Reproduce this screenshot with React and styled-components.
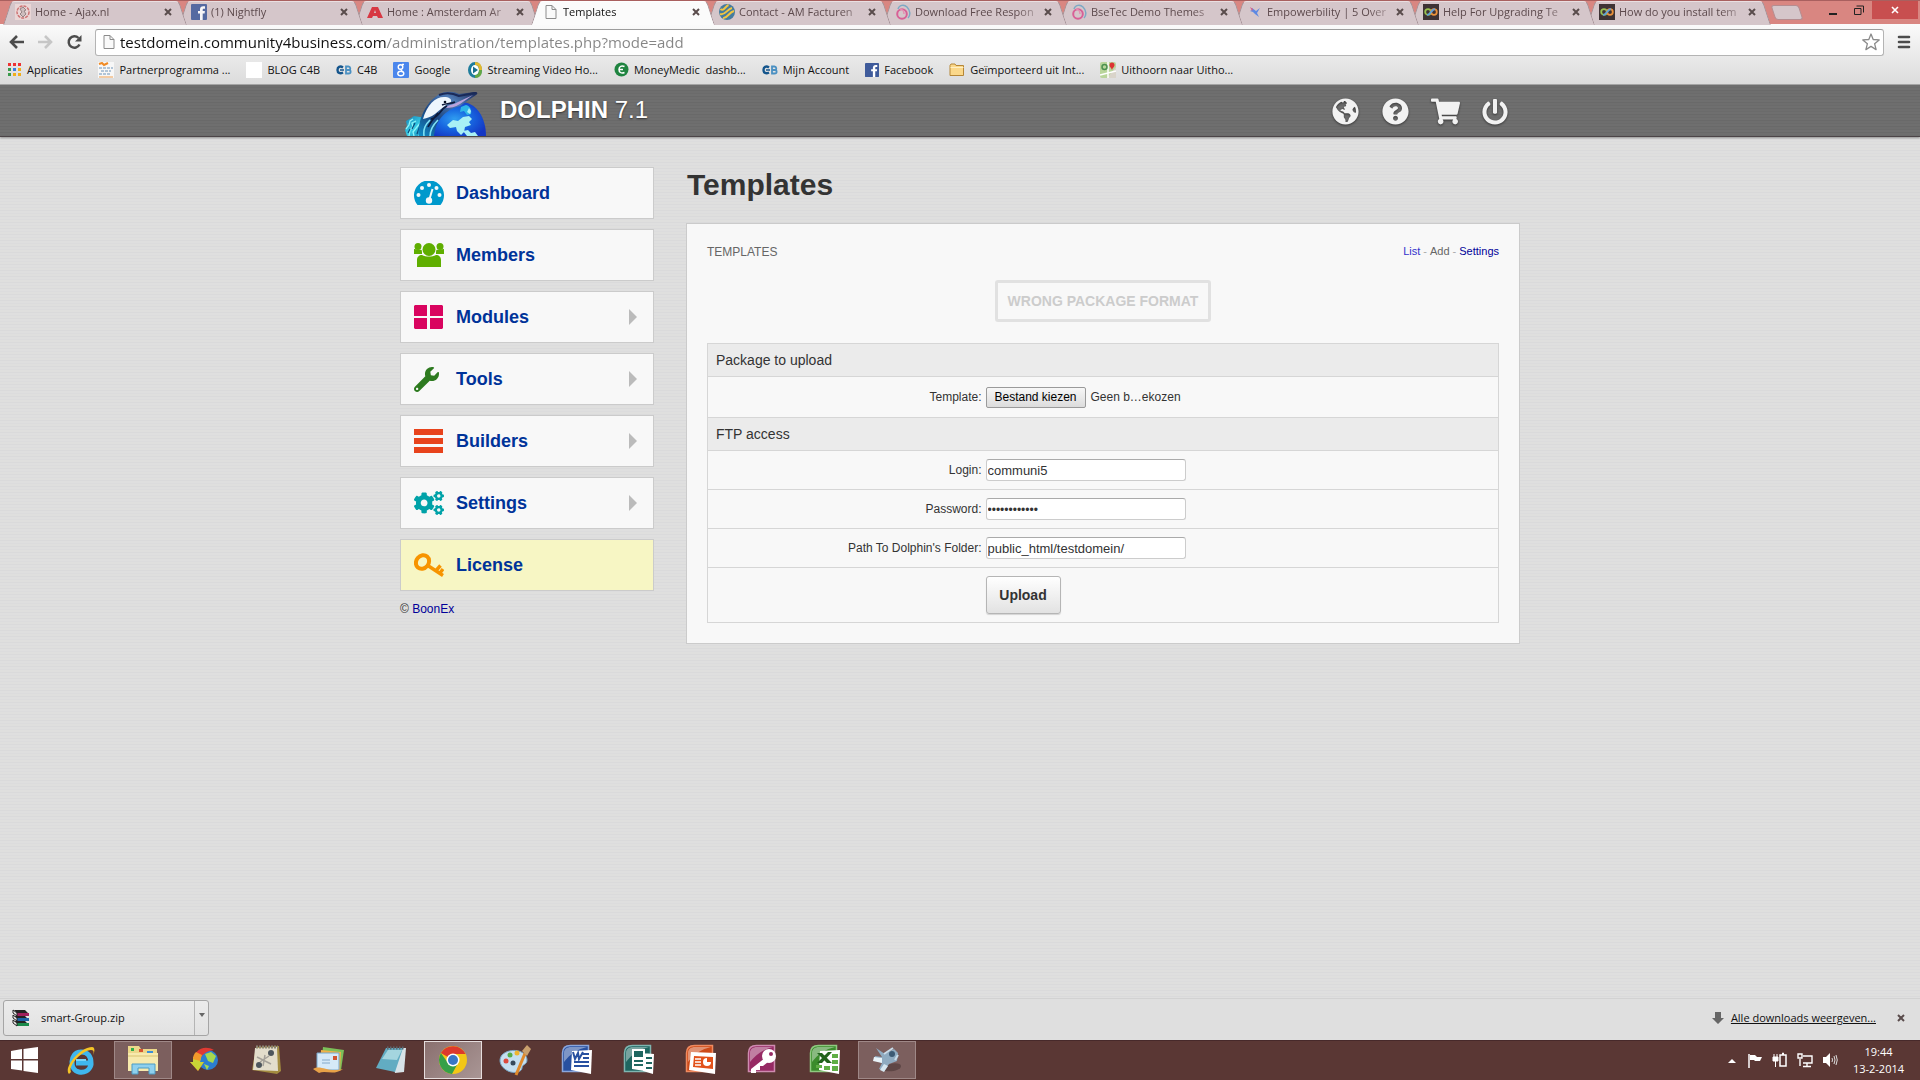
import React, { useRef } from 'react'
import styled, { createGlobalStyle, css } from 'styled-components'
import { FaCogs, FaGlobeAmericas, FaPowerOff, FaQuestionCircle, FaShoppingCart, FaWrench } from 'react-icons/fa'

const ui = '"Open Sans", "Noto Sans", sans-serif'
const arial = '"Liberation Sans", Arial, sans-serif'

const GlobalStyle = createGlobalStyle`
* { box-sizing: border-box; }
body {
  margin: 0;
  font-family: ${arial};
  font-size: 12px;
  color: #333;
}
button, input { font-family: inherit; }
button { padding: 0; border: none; background: none; color: inherit; }
a { text-decoration: none; }
svg { display: block; flex: none; }
`

const Screen = styled.div`
min-height: 100vh;
display: flex;
flex-direction: column;
`

/* browser window */
const TabStrip = styled.div`
height: 24px;
display: flex;
align-items: flex-start;
padding-left: 3px;
background: #d98681;
border-top: 1px solid #a9605f;
font-family: ${ui};
`
const Tabs = styled.div`
display: flex;
flex: 0 1 1760px;
min-width: 0;
isolation: isolate;
`
const Tab = styled.div`
position: relative;
z-index: ${p => (p.$active ? 20 : 10 - p.$index)};
flex: 0 0 184px;
height: 24px;
margin-right: -8px;
padding: 0 15px 2px 12px;
display: flex;
align-items: center;
color: ${p => (p.$active ? '#111' : '#5d4a4d')};
&::before, &::after {
  content: '';
  position: absolute;
  z-index: -1;
  top: 0;
  bottom: 0;
  width: 50%;
  background: ${p => (p.$active ? '#fbfbfb' : '#d5c6ca')};
  border-top: 1px solid ${p => (p.$active ? '#fff' : '#eadfe1')};
}
&::before {
  left: 4px;
  border-left: 1px solid #a28f94;
  border-radius: 4px 0 0 0;
  transform: skewX(-18deg);
}
&::after {
  right: 4px;
  border-right: 1px solid #a28f94;
  border-radius: 0 4px 0 0;
  transform: skewX(18deg);
}
`
const TabIcon = styled.span`
opacity: ${p => (p.$active ? 1 : 0.85)};
`
const TabTitle = styled.span`
flex: 1;
min-width: 0;
margin: 0 4px;
font-size: 11px;
line-height: 16px;
white-space: nowrap;
mask-image: linear-gradient(to right, #000 82%, rgba(0, 0, 0, 0.2));
`
const CloseButton = styled.button`
width: 9px;
height: 16px;
display: flex;
align-items: center;
justify-content: center;
color: #5a4c4c;
`
const NewTab = styled.button`
width: 28px;
height: 15px;
margin: 4px 0 0 10px;
background: #d5c6ca;
border: 1px solid #b58d90;
border-radius: 3px;
transform: skewX(18deg);
`
const WindowButtons = styled.div`
margin-left: auto;
display: flex;
padding-right: 2px;
`
const WindowButton = styled.button`
width: ${p => (p.$close ? 46 : 26)}px;
height: 18px;
display: flex;
align-items: center;
justify-content: center;
background: ${p => (p.$close ? '#c84f4f' : 'transparent')};
`
const Toolbar = styled.div`
height: 33px;
display: flex;
align-items: center;
padding: 3px 9px 0 8px;
background: linear-gradient(#fbfbfb, #e9e9e9);
`
const ToolButton = styled.button`
width: 29px;
height: 24px;
color: ${p => (p.$off ? '#c6c6c6' : '#4c4c4c')};
`
const Address = styled.label`
flex: 1;
height: 27px;
display: flex;
align-items: center;
padding: 0 3px 0 5px;
background: #fff;
border: 1px solid #b4b4b4;
border-top-color: #9c9c9c;
border-radius: 3px;
`
const AddressInput = styled.input`
flex: 1;
margin-left: 3px;
padding: 0;
border: none;
outline: none;
font-family: ${ui};
font-size: 15px;
line-height: 22px;
color: transparent;
background: linear-gradient(to right, #111 266px, #858585 266px);
background-clip: text;
`
const MenuButton = styled.button`
width: 14px;
margin-left: 13px;
`
const Bookmarks = styled.nav`
height: 28px;
display: flex;
align-items: center;
gap: 16px;
padding: 0 8px 2px;
background: linear-gradient(#e9e9e9, #dcdcdc);
border-bottom: 1px solid #a8a8a8;
font-family: ${ui};
`
const Bookmark = styled.a`
display: flex;
align-items: center;
gap: 5px;
font-size: 11px;
line-height: 16px;
white-space: pre;
color: #111;
`

/* page */
const Page = styled.main`
flex: 1;
background: repeating-linear-gradient(#dfdfdf 0 2px, #dcdcdd 2px 3px, #dfdfde 3px 5px, #dadadb 5px 6px);
`
const Header = styled.header`
height: 52px;
background: repeating-linear-gradient(#6e6e6e 0 2px, #6b6b6b 2px 3px, #6f6f6f 3px 5px, #696969 5px 6px);
border-bottom: 1px solid #4c4548;
box-shadow: 0 1px 2px rgba(0, 0, 0, 0.35);
`
const Container = styled.div`
width: 1120px;
max-width: 100%;
margin: 0 auto;
display: flex;
`
const HeaderRow = styled(Container)`
height: 51px;
align-items: flex-end;
padding: 0 10px 0 4px;
`
const LogoText = styled.a`
margin: 0 0 12px 14px;
font-size: 24px;
line-height: 28px;
color: #fff;
text-shadow: 0 1px 2px rgba(0, 0, 0, 0.6);
`
const HeaderTools = styled.div`
margin-left: auto;
height: 51px;
padding-top: 2px;
display: flex;
align-items: center;
gap: 20px;
`
const HeaderLink = styled.a`
width: 30px;
display: flex;
justify-content: center;
color: #f2f2f2;
filter: drop-shadow(0 1px 1px rgba(0, 0, 0, 0.5));
`
const Body = styled(Container)`
padding-top: 30px;
gap: 32px;
`
const Sidebar = styled.aside`
width: 254px;
flex: none;
`
const Menu = styled.nav`
display: flex;
flex-direction: column;
gap: 10px;
`
const MenuItem = styled.a`
height: 52px;
display: flex;
align-items: center;
padding: 0 16px 0 13px;
background: ${p => (p.$highlight ? '#f7f6c4' : '#f8f8f8')};
border: 1px solid #cbcbcb;
font-size: 18px;
font-weight: bold;
color: #039;
`
const MenuIcon = styled.span`
width: 42px;
color: ${p => p.$color};
`
const Arrow = styled.span`
margin-left: auto;
border: 8px solid transparent;
border-left-color: #bbb;
border-right-width: 0;
`
const Copyright = styled.p`
margin: 10px 0 0;
line-height: 16px;
a { color: #009; }
`
const Content = styled.section`
flex: 1;
min-width: 0;
`
const PageTitle = styled.h1`
margin: 0 0 20px 1px;
font-size: 30px;
line-height: 36px;
color: #333;
`
const Panel = styled.div`
padding: 20px;
background: #f8f8f8;
border: 1px solid #cbcbcb;
`
const PanelHead = styled.div`
display: flex;
justify-content: space-between;
align-items: flex-start;
height: 16px;
color: #666;
`
const PanelTitle = styled.h2`
margin: 0;
font-size: 12px;
font-weight: normal;
line-height: 16px;
text-transform: uppercase;
`
const PanelLinks = styled.div`
display: flex;
gap: 3px;
font-size: 11px;
line-height: 14px;
color: #aaa;
`
const PanelLink = styled.a`
color: ${p => p.$color};
`
const Message = styled.div`
width: fit-content;
margin: 20px auto 21px;
padding: 10px;
border: 3px solid #e1e1e1;
border-radius: 3px;
font-size: 14px;
font-weight: bold;
line-height: 16px;
text-transform: uppercase;
color: #ccc;
`
const Form = styled.form`
border: 1px solid #d6d6d6;
`
const SectionTitle = styled.h3`
height: 33px;
margin: 0;
padding-left: 8px;
font-size: 14px;
font-weight: normal;
line-height: 33px;
background: #ebebeb;
border-bottom: 1px solid #d6d6d6;
`
const Row = styled.div`
display: grid;
grid-template-columns: 35% 1fr;
align-items: center;
height: ${p => p.$height}px;
border-bottom: 1px solid #d6d6d6;
&:last-child { border-bottom: none; }
`
const FieldLabel = styled.label`
padding-right: 3px;
text-align: right;
line-height: 16px;
`
const Field = styled.div`
display: flex;
align-items: center;
gap: 5px;
padding-left: 1px;
`
const TextInput = styled.input`
width: 200px;
height: 22px;
padding: 1px 1px 0;
background: #fff;
border: 1px solid #ccc;
border-top-color: #aaa;
border-radius: 3px;
font-size: ${p => (p.type === 'password' ? 12 : 13)}px;
color: #333;
`
const FileInput = styled.input`
display: none;
`
const FileButton = styled.button`
width: 100px;
height: 21px;
background: linear-gradient(#f7f7f7, #dcdcdc);
border: 1px solid #9a9a9a;
border-radius: 2px;
font-size: 12px;
color: #000;
`
const UploadButton = styled.button`
width: 75px;
height: 38px;
background: linear-gradient(#fff, #e2e2e2);
border: 1px solid #b5b5b5;
border-radius: 3px;
box-shadow: 0 1px 1px rgba(0, 0, 0, 0.15);
font-size: 14px;
font-weight: bold;
color: #333;
`

/* downloads and taskbar */
const DownloadBar = styled.div`
height: 42px;
display: flex;
align-items: center;
padding: 0 15px 4px 3px;
background: #dfdfdf;
border-top: 1px solid #d2d2d2;
font-family: ${ui};
color: #111;
`
const Download = styled.div`
width: 206px;
height: 36px;
display: flex;
background: linear-gradient(#ebebeb, #e2e2e2);
border: 1px solid #a5a5a5;
border-radius: 3px;
`
const DownloadFile = styled.button`
flex: 1;
display: flex;
align-items: center;
gap: 11px;
padding-left: 8px;
font-size: 11px;
`
const DownloadMenu = styled.button`
width: 14px;
display: flex;
justify-content: center;
padding-top: 12px;
border-left: 1px solid #b4b4b4;
color: #666;
`
const AllDownloads = styled.a`
margin: 0 20px 0 7px;
font-size: 11px;
color: #111;
text-decoration: underline;
`
const Spacer = styled.div`
flex: 1;
`
const Taskbar = styled.footer`
height: 40px;
display: flex;
align-items: center;
gap: 4px;
padding-right: 16px;
background: #5a3734;
box-shadow: inset 0 1px #47292a;
`
const TaskButton = styled.button`
width: ${p => (p.$start ? 48 : 58)}px;
height: 38px;
display: flex;
align-items: center;
justify-content: center;
${p => p.$open && css`
  background: #7c5f5e;
  border: 1px solid #9f8887;
`}
${p => p.$active && css`
  background: linear-gradient(135deg, #8a706f, #a99695);
  border: 1px solid #e6dddd;
`}
`
const Tray = styled.div`
display: flex;
align-items: center;
gap: 9px;
`
const Clock = styled.div`
margin-left: 6px;
font-family: ${ui};
font-size: 11px;
line-height: 17px;
text-align: center;
color: #fff;
`

const Svg = ({ w = 16, h = w, box, children }) => (
  <svg width={w} height={h} viewBox={box || `0 0 ${w} ${h}`} aria-hidden="true">{children}</svg>
)

const Cross = ({ size = 8, color = 'currentColor', width = 2 }) => (
  <Svg w={size} box="0 0 8 8">
    <path d="M1 1l6 6M7 1L1 7" stroke={color} strokeWidth={width} />
  </Svg>
)

/* favicons */
const AjaxIcon = () => (
  <Svg>
    <rect width="16" height="16" fill="#eed9d9" />
    <circle cx="8" cy="8" r="6" fill="none" stroke="#c66" strokeWidth="1.5" strokeDasharray="3 1" />
    <path d="M5 5l3-2 3 3-2 1 2 3-3 3-3-3 2-2z" fill="#cdbcbc" stroke="#8a7878" />
  </Svg>
)
const FacebookIcon = ({ size = 16 }) => (
  <Svg w={size} box="0 0 16 16">
    <rect width="16" height="16" rx="1" fill="#3f5b9b" />
    <path d="M9 16V9.500H7V7h2V5.500C9 3.300 10.300 2.200 12.200 2.200H14v2.500h-1.200c-.9 0-1.100.4-1.100 1.200V7h2.200l-.3 2.500h-1.900V16z" fill="#fff" />
  </Svg>
)
const AmsterdamIcon = () => (
  <Svg>
    <path d="M0 14L5 3h6l5 11h-5l-1-2H6l-1 2zM7 9h2L8 6z" fill="#d8202c" fillRule="evenodd" />
  </Svg>
)
const PageIcon = () => (
  <Svg>
    <path d="M3 1.500h6l4 4v9H3z" fill="#fafafa" stroke="#8c8c8c" />
    <path d="M9 1.500v4h4" fill="none" stroke="#8c8c8c" />
  </Svg>
)
const StripedBall = () => (
  <Svg>
    <circle cx="8" cy="8" r="8" fill="#2c6f97" />
    <path d="M1.500 5c3 3 5-3 8-4M1 10c5 2 7-5 12-6M4 14c4 1 6-6 11-7" fill="none" stroke="#f5c52b" strokeWidth="2" />
  </Svg>
)
const RingIcon = () => (
  <Svg>
    <circle cx="7" cy="10" r="4.800" fill="none" stroke="#d94f8e" strokeWidth="2" />
    <path d="M3 5c1-4 6-5 9-2s4 8 1 11" fill="none" stroke="#6fa5c4" strokeWidth="1.500" />
    <path d="M5 5c2 0 4 2 4 5" fill="none" stroke="#e886ae" strokeWidth="1.500" />
  </Svg>
)
const BirdIcon = () => (
  <Svg>
    <path d="M5 4l4 3 4-3-3 5 2 4-4-3-2-2-3-1 2-1z" fill="#4a7fe8" />
    <path d="M3 3l3 2-1 2z" fill="#d84a7a" />
  </Svg>
)
const LoopIcon = () => (
  <Svg>
    <rect width="16" height="16" fill="#241a1c" />
    <circle cx="5" cy="8" r="2.800" fill="none" stroke="#8fc13c" strokeWidth="1.800" />
    <circle cx="11" cy="8" r="2.800" fill="none" stroke="#f08a24" strokeWidth="1.800" />
    <path d="M4 10.800c4 .5 4-5.600 8-5.600" fill="none" stroke="#4b9ade" strokeWidth="1.800" />
  </Svg>
)
const AppsIcon = () => (
  <Svg w={14}>
    {['#e33', '#e33', '#e33', '#3a9b4b', '#3a7de0', '#f0ae1b', '#3a9b4b', '#f0ae1b', '#f0ae1b'].map((c, i) => (
      <rect key={i} x={(i % 3) * 5} y={Math.floor(i / 3) * 5} width="3" height="3" fill={c} />
    ))}
  </Svg>
)
const PartnerIcon = () => (
  <Svg>
    <rect width="16" height="16" fill="#f7f7f7" />
    <path d="M1 2l3-1 2 2 4-2" stroke="#f08a24" strokeWidth="2" fill="none" />
    <path d="M1 6h14M3 9h10M1 12h12" stroke="#6d93b8" strokeDasharray="3 1" />
    <path d="M1 15h14" stroke="#f0a050" />
  </Svg>
)
const BlankIcon = () => (
  <Svg><rect width="16" height="16" fill="#fff" /></Svg>
)
const C4BIcon = () => (
  <Svg>
    <path d="M7 5.500C4 3.500 1.500 5 1.500 8s2.500 4 5.500 2.500" fill="none" stroke="#14558c" strokeWidth="2.400" />
    <path d="M4 8h4" stroke="#14558c" strokeWidth="1.500" />
    <path d="M10 4.500v7h2.500c3 0 2.500-3.500.5-3.500 2 0 1.500-3.500-.5-3.500zM10 8h3" fill="none" stroke="#4a90c2" strokeWidth="1.800" />
  </Svg>
)
const GoogleIcon = () => (
  <Svg>
    <rect width="16" height="16" rx="1" fill="#4a86ec" />
    <circle cx="7.500" cy="5" r="2.300" fill="none" stroke="#fff" strokeWidth="1.400" />
    <ellipse cx="7.800" cy="11.500" rx="3" ry="2.200" fill="none" stroke="#fff" strokeWidth="1.400" />
    <path d="M9 2.500h2M8 7.500l1 1.500" stroke="#fff" strokeWidth="1.300" />
  </Svg>
)
const StreamIcon = () => (
  <Svg>
    <ellipse cx="8" cy="8" rx="5.500" ry="6.500" fill="#fff" stroke="#1f7d9c" strokeWidth="3" />
    <path d="M8 1.500c4 0 5.500 3 5.500 6.500" fill="none" stroke="#e2b92f" strokeWidth="3" />
    <path d="M13.500 8c0 4-2 6.500-5.500 6.500" fill="none" stroke="#64a843" strokeWidth="3" />
    <path d="M6 4.500l5 3.500-5 3.500z" fill="#1a6f8d" />
  </Svg>
)
const MoneyIcon = () => (
  <Svg w={15}>
    <circle cx="7.500" cy="7.500" r="7" fill="#1f8440" />
    <path d="M10.500 4.500C7 3 5 5 5 7.500s2 4.500 5.500 3M5 7.500H9" fill="none" stroke="#fff" strokeWidth="1.500" />
  </Svg>
)
const FolderIcon = () => (
  <Svg>
    <path d="M1 3.500l1-1.500h4l1 1.500h7.500v10H1z" fill="#fbd88a" stroke="#b58636" />
    <path d="M1.500 5.500h13" stroke="#fff0c4" />
  </Svg>
)
const MapIcon = () => (
  <Svg>
    <rect width="16" height="16" rx="2" fill="#b9d59b" />
    <path d="M7 16L16 5v11z" fill="#d9d4ca" />
    <path d="M0 13L16 9M8 0v16" stroke="#fff" strokeWidth="1.500" />
    <circle cx="4.500" cy="5" r="2.500" fill="none" stroke="#4c9150" strokeWidth="1.500" />
    <path d="M12 8c-1-3-2.500-3-2.500-5a2.500 2.500 0 0 1 5 0c0 2-1.500 2-2.500 5z" fill="#d33" />
  </Svg>
)

/* toolbar drawings */
const BackIcon = ({ flip }) => (
  <Svg w={17} h={24}>
    <path d="M9 6l-6 6 6 6M3 12h13" fill="none" stroke="currentColor" strokeWidth="2.600" transform={flip ? 'translate(17 0) scale(-1 1)' : undefined} />
  </Svg>
)
const ReloadIcon = () => (
  <Svg w={17} h={24}>
    <path d="M12.500 8A5.700 5.700 0 1 0 13.500 14.500" fill="none" stroke="currentColor" strokeWidth="2.500" />
    <path d="M15.500 5v6.500H9z" fill="currentColor" />
  </Svg>
)
const StarIcon = () => (
  <Svg w={18}>
    <path d="M9 1l2.200 5.500 6 .4-4.600 3.800 1.500 5.900L9 13.400l-5.100 3.200 1.500-5.900L.8 6.900l6-.4z" fill="#fff" stroke="#8a8a8a" strokeWidth="1.300" strokeLinejoin="round" />
  </Svg>
)
const HamburgerIcon = () => (
  <Svg w={14}>
    <path d="M2 2h10M2 7h10M2 12h10" stroke="#4c4c4c" strokeWidth="2.600" strokeLinecap="round" />
  </Svg>
)

const DolphinLogo = () => (
  <Svg w={82} h={45}>
    <defs>
      <radialGradient id="sea" cx="0.45" cy="0.5" r="0.6">
        <stop offset="0" stopColor="#2f9df0" />
        <stop offset="0.5" stopColor="#1766e0" />
        <stop offset="1" stopColor="#1437c4" />
      </radialGradient>
      <linearGradient id="skin" x1="0" y1="1" x2="1" y2="0">
        <stop offset="0" stopColor="#0d8dc8" />
        <stop offset="0.35" stopColor="#1b4580" />
        <stop offset="0.7" stopColor="#4f7bb5" />
        <stop offset="1" stopColor="#16224f" />
      </linearGradient>
      <linearGradient id="splash" x1="0" y1="0" x2="1" y2="1">
        <stop offset="0" stopColor="#1581b5" />
        <stop offset="0.5" stopColor="#35cbe6" />
        <stop offset="1" stopColor="#1270a8" />
      </linearGradient>
    </defs>
    <path d="M25 45C26 25 42 11 57 11c15 0 25 15 25 34z" fill="url(#sea)" />
    <path d="M62 14c4 1 6 5 5 9l-4 1-3-4-4 1 1-5z" fill="#2fb6e8" />
    <path d="M43 34l6-5 5 1 5-4 6-1 3 3-3 3 2 3-6 2-1 5-3 3-4-4-1-4-6 1zM59 40l5-1 3 3 4-1 3 4H63zM65 17l2 3-1 3-3-2z" fill="#a8f0f5" />
    <path d="M3 45l-2-6 2-4-1-5 5-3 3-2 6 1 9 2-3 17z" fill="url(#splash)" />
    <path d="M2 38l3-4 1-4 3-2M5 45l1-6 3-3-1-4 4-2M10 45l-1-4 4-5 4-5M15 45l2-7 5-7" fill="none" stroke="#8df4f8" strokeWidth="1.300" />
    <path d="M4 42l2-4M8 38l3-6M13 43l3-9" fill="none" stroke="#0b4a7c" strokeWidth="1.200" />
    <path d="M15 45C13 31 21 12 34 4c6-4 15-4 21-1l16-2c3 0 3 2 1 3L56 15C45 18 41 22 36 28c-4 5-5 11-6 17z" fill="url(#skin)" />
    <path d="M19 28C23 14 31 6 40 6c5 0 8 2 7 5-6 3-11 8-16 12-4 3-8 4-12 5z" fill="#eef6fd" />
    <path d="M41 17c4-4 8-3 13-6l15-7-13 9c-5 3-9 4-15 4z" fill="#b9a3dc" />
    <path d="M35 4c7-3 14-2 20 1l16-3" fill="none" stroke="#1a2a58" strokeWidth="2" />
    <path d="M38 14c5-2 9-1 13-3M27 28c9-2 9-10 16-13M24 36c3-6 6-9 10-14" fill="none" stroke="#0d1b3c" strokeWidth="1.600" />
    <path d="M20 45c-1-8 2-12 6-16M26 45c0-7 4-12 8-16" fill="none" stroke="#7ee2f4" strokeWidth="1.600" />
    <circle cx="41" cy="11" r="1.300" fill="#071022" />
  </Svg>
)

/* sidebar drawings */
const GaugeIcon = () => (
  <Svg w={30} h={24}>
    <path d="M3.500 24A15 15 0 1 1 26.500 24z" fill="currentColor" />
    <g fill="#f8f8f8">
      <circle cx="4.500" cy="14" r="2" />
      <circle cx="8" cy="7" r="2" />
      <circle cx="15" cy="4" r="2" />
      <circle cx="22.500" cy="7" r="2" />
      <circle cx="25.500" cy="14" r="2" />
      <circle cx="15" cy="19.500" r="3.200" />
    </g>
    <path d="M15.500 18l3-10" stroke="#f8f8f8" strokeWidth="2" />
  </Svg>
)
const GroupIcon = () => (
  <Svg w={30} h={24}>
    <g fill="currentColor">
      <circle cx="4" cy="3.500" r="3.500" />
      <circle cx="26" cy="3.500" r="3.500" />
      <path d="M0 6l8 1v4H0zM30 6l-8 1v4h8z" />
      <circle cx="15" cy="6.500" r="7.500" fill="#f8f8f8" />
      <circle cx="15" cy="6.500" r="6.500" />
      <path d="M3 24V17c0-3 2-5 5-5 4 2 10 2 14 0 3 0 5 2 5 5v7z" />
    </g>
  </Svg>
)
const BlocksIcon = () => (
  <Svg w={30} h={24}>
    <path d="M1 0h12v11H0V1zM16 0h12l1 1v10H16zM0 13h13v11H1l-1-1zM16 13h13v10l-1 1H16z" fill="currentColor" />
  </Svg>
)
const BarsIcon = () => (
  <Svg w={30} h={24}>
    <path d="M0 0h29v6H0zM0 9h29v6H0zM0 18h29v6H0z" fill="currentColor" />
  </Svg>
)
const KeyIcon = () => (
  <Svg w={30} h={24}>
    <ellipse cx="8.500" cy="9" rx="7.200" ry="6.200" transform="rotate(-50 8.500 9)" fill="none" stroke="currentColor" strokeWidth="4" />
    <path d="M13 12l16 10.500M22.500 17l4-4.500M26 20l3-4" fill="none" stroke="currentColor" strokeWidth="3.400" />
  </Svg>
)

/* taskbar drawings */
const WindowsIcon = () => (
  <Svg w={27} h={26}>
    <path d="M0 4l11-2v10H0zM12.500 2L27 0v12H12.500zM0 13.500h11v10L0 22zM12.500 13.500H27V26l-14.500-2z" fill="#fff" />
  </Svg>
)
const ExplorerIcon = () => (
  <Svg w={32}>
    <path d="M26 21c-2 6-7 8-12 7C4 26 5 9 15 8c8-1 11 5 11 11H11" fill="none" stroke="#3fb7ee" strokeWidth="5" />
    <path d="M11 16h10" stroke="#7bd5f7" strokeWidth="2" />
    <path d="M4 30C-2 24 15 3 27 3c3 0 3 4 1 8 1-3 1-5-2-5C16 7 3 22 6 28z" fill="#f5c526" />
  </Svg>
)
const FilesIcon = () => (
  <Svg w={32}>
    <path d="M1 2h11l2 3h16v22H1z" fill="#ecd88a" />
    <path d="M4 4h3v3H4z" fill="#2fae4a" /><path d="M12 5h4v3h-4z" fill="#d8542f" /><path d="M20 7h6v3h-6z" fill="#3a90d8" />
    <path d="M1 9h30v18H1z" fill="#f7eaae" /><path d="M1 12h30" stroke="#d8c270" />
    <path d="M5 30V20h23v10h-6v-6H11v6z" fill="#8fd0ee" stroke="#4c9cc4" />
  </Svg>
)
const SwirlIcon = () => (
  <Svg w={30}>
    <circle cx="18" cy="15" r="10" fill="#2b7ed0" />
    <path d="M15 9l6-2 5 4-3 7-5-2zM14 19l5 2-2 4z" fill="#a6d84f" />
    <path d="M24 5C14-1 3 5 3 17H0l8 9 6-9h-4c0-6 5-11 14-12z" fill="#e03a32" />
    <path d="M3 17H0l8 9 6-9h-4l1-4-8-1z" fill="#c8d436" />
    <path d="M3 14c0-3 1-5 3-7l6 3-2 6z" fill="#f29a2b" />
  </Svg>
)
const MapBookIcon = () => (
  <Svg w={32}>
    <path d="M5 3l23-1 2 25-4 3-25-4z" fill="#a38c40" />
    <path d="M4 4l22-1 1 24-25-1z" fill="#e3ddcb" />
    <circle cx="20" cy="9" r="3" fill="#4d565c" /><circle cx="8" cy="21" r="3" fill="#4d565c" />
    <path d="M6 13l14 7M9 18l9-6M14 11l-2 11" stroke="#a5a199" strokeWidth="1.500" />
    <path d="M5 3h22" stroke="#8b8573" strokeWidth="3" strokeDasharray="2 1" />
  </Svg>
)
const MailIcon = () => (
  <Svg w={32}>
    <path d="M10 3l21 3-3 20-20-3z" fill="#7cbf59" />
    <path d="M8 6l20 2-1 18-20-2z" fill="#f0b24a" />
    <path d="M4 9h22v17H4z" fill="#d5e9f8" stroke="#78a9cc" />
    <path d="M20 12h4v4h-4z" fill="#d05430" /><path d="M9 16h8M9 19h8" stroke="#84a8c8" />
    <path d="M0 25c8-5 14 4 30 0-9 7-17 1-24 4z" fill="#e8a248" />
  </Svg>
)
const NotepadIcon = () => (
  <Svg w={32}>
    <path d="M13 4h18l-2 24-9 1z" fill="#d8e3e8" />
    <path d="M11 4h17l-8 24L1 24z" fill="#62acc2" /><path d="M13 6h14l-5 10L7 15z" fill="#a4d5df" />
    <path d="M12 4h18" stroke="#5d6870" strokeWidth="3" strokeDasharray="1.500 1.500" />
  </Svg>
)
const ChromeIcon = () => (
  <Svg w={30}>
    <circle cx="15" cy="15" r="14" fill="#f3c716" />
    <path d="M15 15L2.900 8A14 14 0 0 1 27.500 9H15z" fill="#dc3a2c" />
    <path d="M2.900 8A14 14 0 0 0 14 29l6-11-5-3-5 3z" fill="#36a048" />
    <circle cx="15" cy="15" r="6.500" fill="#fff" /><circle cx="15" cy="15" r="5" fill="#3877c6" />
  </Svg>
)
const PaintIcon = () => (
  <Svg w={32}>
    <path d="M3 11c8-8 25-5 25 5 0 5-5 4-5 8s-8 6-14 3C1 23-1 16 3 11z" fill="#c5dff0" stroke="#77a6c5" />
    <circle cx="7" cy="17" r="2.500" fill="#dc4a3d" /><circle cx="11" cy="11" r="2.500" fill="#55ae4a" /><circle cx="18" cy="9" r="2.500" fill="#eeb52f" /><circle cx="14" cy="19" r="2.500" fill="#36495b" />
    <path d="M27 7L17 31" stroke="#e08a2b" strokeWidth="3" /><path d="M23 7l5-6 4 4-4 7z" fill="#c9a06d" />
  </Svg>
)
const OfficeIcon = ({ color, light, children }) => (
  <Svg w={32}>
    <path d="M1.500 27.500V9c0-5 3-7.500 8-7.500h18v26z" fill={color} stroke={light} strokeWidth="1.500" />
    <path d="M3 18V9c0-4 3-6 7-6h16C17 5 9 10 3 18z" fill="#fff" opacity="0.4" />
    {children}
  </Svg>
)
const Sheet = () => <path d="M11 7l20-1-1 24-20-4z" fill="#fff" />
const WordIcon = () => (
  <OfficeIcon color="#2850a0" light="#8aa6dc">
    <Sheet />
    <path d="M12 8l2 7 3-6 1 6 4-7M22 10h6M22 14h6M13 18h15M13 22h15" fill="none" stroke="#2850a0" strokeWidth="2" />
  </OfficeIcon>
)
const PublisherIcon = () => (
  <OfficeIcon color="#1e6660" light="#7fb5b0">
    <path d="M9 5h13v22l-13-2zM19 9l12 1-1 20-10-3z" fill="#fff" />
    <path d="M11 7h9v6h-9zM11 16h9v2h-9zM11 20h9v2h-9zM23 13h6v2h-6zM23 18h6v2h-6zM23 23h6v2h-6z" fill="#1e6660" />
  </OfficeIcon>
)
const PowerpointIcon = () => (
  <OfficeIcon color="#cd4a18" light="#f08a60">
    <path d="M6 8l25 1-1 21-26-4z" fill="#fff" />
    <path d="M9 12l19 1v12L8 23z" fill="#e2521b" />
    <path d="M10 15h6M10 18h6M10 21h6" stroke="#fff" strokeWidth="1.500" /><circle cx="22" cy="18" r="4" fill="#fff" /><path d="M22 18v-4h4v4z" fill="#e2521b" />
  </OfficeIcon>
)
const AccessIcon = () => (
  <OfficeIcon color="#962a64" light="#cf8bb0">
    <circle cx="22" cy="12" r="7" fill="#fff" /><circle cx="24" cy="10" r="2" fill="#962a64" />
    <path d="M18 14L4 25v4h5v-3h4v-4h3l5-4z" fill="#fff" />
  </OfficeIcon>
)
const ExcelIcon = () => (
  <OfficeIcon color="#3b8c2c" light="#8fca80">
    <Sheet />
    <path d="M8 9h5l10 10h-5zM19 8h4L13 19H8z" fill="#22631c" />
    <path d="M23 10h6v4h-6zM23 16h6v4h-6zM7 21h6v3H7zM15 22h6v4h-6zM23 22h6v5h-6z" fill="#5fae45" />
  </OfficeIcon>
)
const CameraIcon = () => (
  <Svg w={32}>
    <path d="M12 24c6-6 18-6 18-2s-8 6-16 5z" fill="#4b3535" opacity="0.6" />
    <path d="M5 4l9 6 9-5 4 4-1 8-8 3-5 7-5-2 3-6-8-3 1-4 7 1z" fill="#8fabc1" />
    <path d="M3 13l8 1v5l-9-2z" fill="#e9f4fa" /><path d="M9 26l4-6 4 2-4 6z" fill="#d5e6f0" />
    <circle cx="21" cy="10" r="3" fill="#3c5a74" /><path d="M13 10l9-6M24 16l3-5" stroke="#c8dcea" strokeWidth="2" />
  </Svg>
)
const BooksIcon = () => (
  <Svg w={18}>
    <path d="M2 1h11l3 3H5zM2 7h11l3 3H5zM2 12h11l3 3H5z" fill="#222" />
    <path d="M5 4h12v3H5z" fill="#a01f5c" /><path d="M5 9h12v3H5z" fill="#1d62a8" /><path d="M5 14h12v3H5z" fill="#1a8a4a" />
    <path d="M1 1l4 3v3L1 4zM1 6l4 3v3L1 9zM1 11l4 3v3l-4-3z" fill="#eee" stroke="#222" />
  </Svg>
)

const tabs = [
  { title: 'Home - Ajax.nl', icon: <AjaxIcon /> },
  { title: '(1) Nightfly', icon: <FacebookIcon /> },
  { title: 'Home : Amsterdam Ar', icon: <AmsterdamIcon /> },
  { title: 'Templates', icon: <PageIcon />, active: true },
  { title: 'Contact - AM Facturen', icon: <StripedBall /> },
  { title: 'Download Free Respon', icon: <RingIcon /> },
  { title: 'BseTec Demo Themes', icon: <RingIcon /> },
  { title: 'Empowerbility | 5 Over', icon: <BirdIcon /> },
  { title: 'Help For Upgrading Te', icon: <LoopIcon /> },
  { title: 'How do you install tem', icon: <LoopIcon /> },
]

const bookmarks = [
  ['Applicaties', <AppsIcon />],
  ['Partnerprogramma ...', <PartnerIcon />],
  ['BLOG C4B', <BlankIcon />],
  ['C4B', <C4BIcon />],
  ['Google', <GoogleIcon />],
  ['Streaming Video Ho...', <StreamIcon />],
  ['MoneyMedic  dashb...', <MoneyIcon />],
  ['Mijn Account', <C4BIcon />],
  ['Facebook', <FacebookIcon size={14} />],
  ['Geïmporteerd uit Int...', <FolderIcon />],
  ['Uithoorn naar Uitho...', <MapIcon />],
]

const menu = [
  { name: 'Dashboard', color: '#0099cc', icon: <GaugeIcon /> },
  { name: 'Members', color: '#5fae00', icon: <GroupIcon /> },
  { name: 'Modules', color: '#d9045f', icon: <BlocksIcon />, sub: true },
  { name: 'Tools', color: '#2d7a1f', icon: <FaWrench size={25} />, sub: true },
  { name: 'Builders', color: '#e8431c', icon: <BarsIcon />, sub: true },
  { name: 'Settings', color: '#00a2a8', icon: <FaCogs size={30} />, sub: true },
  { name: 'License', color: '#f79400', icon: <KeyIcon />, highlight: true },
]

const headerLinks = [
  ['Site', <FaGlobeAmericas size={27} />],
  ['Help', <FaQuestionCircle size={27} />],
  ['Market', <FaShoppingCart size={29} />],
  ['Logout', <FaPowerOff size={26} />],
]

const tasks = [
  ['Internet Explorer', <ExplorerIcon />],
  ['Explorer', <FilesIcon />, 'open'],
  ['Browser', <SwirlIcon />],
  ['Maps', <MapBookIcon />],
  ['Mail', <MailIcon />],
  ['Notepad', <NotepadIcon />],
  ['Chrome', <ChromeIcon />, 'active'],
  ['Paint', <PaintIcon />],
  ['Word', <WordIcon />],
  ['Publisher', <PublisherIcon />],
  ['PowerPoint', <PowerpointIcon />],
  ['Access', <AccessIcon />],
  ['Excel', <ExcelIcon />],
  ['Camera', <CameraIcon />, 'open'],
]

const BrowserTop = () => (
  <>
    <TabStrip>
      <Tabs>
        {tabs.map((tab, i) => (
          <Tab key={tab.title} $active={tab.active} $index={i}>
            <TabIcon $active={tab.active}>{tab.icon}</TabIcon>
            <TabTitle>{tab.title}</TabTitle>
            <CloseButton aria-label="Close tab"><Cross /></CloseButton>
          </Tab>
        ))}
      </Tabs>
      <NewTab aria-label="New tab" />
      <WindowButtons>
        <WindowButton aria-label="Minimize"><Svg w={8} h={10}><path d="M0 9h8" stroke="#222" strokeWidth="2" /></Svg></WindowButton>
        <WindowButton aria-label="Restore">
          <Svg w={10}><path d="M.5 3.500h6.500v6H.5zM2.500 1h7v6.500" fill="none" stroke="#222" /></Svg>
        </WindowButton>
        <WindowButton $close aria-label="Close"><Cross color="#fff" width={1.6} /></WindowButton>
      </WindowButtons>
    </TabStrip>
    <Toolbar>
      <ToolButton aria-label="Back"><BackIcon /></ToolButton>
      <ToolButton $off aria-label="Forward"><BackIcon flip /></ToolButton>
      <ToolButton aria-label="Reload"><ReloadIcon /></ToolButton>
      <Address>
        <PageIcon />
        <AddressInput aria-label="Address" defaultValue="testdomein.community4business.com/administration/templates.php?mode=add" />
        <StarIcon />
      </Address>
      <MenuButton aria-label="Menu"><HamburgerIcon /></MenuButton>
    </Toolbar>
    <Bookmarks>
      {bookmarks.map(([name, icon]) => (
        <Bookmark key={name} href="#">{icon}{name}</Bookmark>
      ))}
    </Bookmarks>
  </>
)

const UploadForm = () => {
  const file = useRef(null)
  return (
    <Form onSubmit={e => e.preventDefault()}>
      <SectionTitle>Package to upload</SectionTitle>
      <Row $height={41}>
        <FieldLabel htmlFor="template">Template:</FieldLabel>
        <Field>
          <FileInput ref={file} id="template" type="file" />
          <FileButton type="button" onClick={() => file.current.click()}>Bestand kiezen</FileButton>
          <span>Geen b…ekozen</span>
        </Field>
      </Row>
      <SectionTitle>FTP access</SectionTitle>
      <Row $height={39}>
        <FieldLabel htmlFor="login">Login:</FieldLabel>
        <Field><TextInput id="login" type="text" defaultValue="communi5" /></Field>
      </Row>
      <Row $height={39}>
        <FieldLabel htmlFor="password">Password:</FieldLabel>
        <Field><TextInput id="password" type="password" defaultValue="abcdefghijkl" /></Field>
      </Row>
      <Row $height={39}>
        <FieldLabel htmlFor="path">Path To Dolphin's Folder:</FieldLabel>
        <Field><TextInput id="path" type="text" defaultValue="public_html/testdomein/" /></Field>
      </Row>
      <Row $height={54}>
        <span />
        <Field><UploadButton type="submit">Upload</UploadButton></Field>
      </Row>
    </Form>
  )
}

const App = () => {
  return (
    <Screen>
      <GlobalStyle />
      <BrowserTop />
      <Page>
        <Header>
          <HeaderRow>
            <DolphinLogo />
            <LogoText href="#"><b>DOLPHIN</b> 7.1</LogoText>
            <HeaderTools>
              {headerLinks.map(([name, icon]) => (
                <HeaderLink key={name} href="#" aria-label={name}>{icon}</HeaderLink>
              ))}
            </HeaderTools>
          </HeaderRow>
        </Header>
        <Body>
          <Sidebar>
            <Menu>
              {menu.map(item => (
                <MenuItem key={item.name} href="#" $highlight={item.highlight}>
                  <MenuIcon $color={item.color}>{item.icon}</MenuIcon>
                  {item.name}
                  {item.sub && <Arrow />}
                </MenuItem>
              ))}
            </Menu>
            <Copyright>© <a href="#">BoonEx</a></Copyright>
          </Sidebar>
          <Content>
            <PageTitle>Templates</PageTitle>
            <Panel>
              <PanelHead>
                <PanelTitle>Templates</PanelTitle>
                <PanelLinks>
                  <PanelLink href="#" $color="#33c">List</PanelLink>-
                  <PanelLink as="span" $color="#666">Add</PanelLink>-
                  <PanelLink href="#" $color="#009">Settings</PanelLink>
                </PanelLinks>
              </PanelHead>
              <Message>Wrong package format</Message>
              <UploadForm />
            </Panel>
          </Content>
        </Body>
      </Page>
      <DownloadBar>
        <Download>
          <DownloadFile><BooksIcon />smart-Group.zip</DownloadFile>
          <DownloadMenu aria-label="Download options"><Svg w={6} h={4}><path d="M0 0h6L3 4z" fill="currentColor" /></Svg></DownloadMenu>
        </Download>
        <Spacer />
        <Svg w={12}><path d="M3 0h6v6h3l-6 6-6-6h3z" fill="#666" /></Svg>
        <AllDownloads href="#">Alle downloads weergeven...</AllDownloads>
        <CloseButton aria-label="Close downloads"><Cross /></CloseButton>
      </DownloadBar>
      <Taskbar>
        <TaskButton $start aria-label="Start"><WindowsIcon /></TaskButton>
        {tasks.map(([name, icon, state]) => (
          <TaskButton key={name} aria-label={name} $open={state === 'open'} $active={state === 'active'}>{icon}</TaskButton>
        ))}
        <Spacer />
        <Tray>
          <Svg w={8} h={5}><path d="M0 5l4-4 4 4z" fill="#fff" /></Svg>
          <Svg w={18}><path d="M4 3v14" stroke="#fff" strokeWidth="1.500" /><path d="M5 4h5l2 2h5l-2 4h-5L9 9H5z" fill="#fff" /></Svg>
          <Svg w={16}><path d="M8 3h6v11H8zM10 1.500h2" fill="none" stroke="#fff" strokeWidth="1.500" /><path d="M1 5h5v4H1zM2 2v3M5 2v3M3.500 9v6" fill="#fff" stroke="#fff" /></Svg>
          <Svg w={16}><path d="M6 4h9v7H6M10 11v3M6 14.500h8M3 7v7M1 2h4v4H1z" fill="none" stroke="#fff" strokeWidth="1.400" /></Svg>
          <Svg w={16}><path d="M1 5h3l4-4v14l-4-4H1z" fill="#fff" /><path d="M10 6q1 2 0 4M12 4q2 4 0 8M14 3q2.500 5 0 10" fill="none" stroke="#ddd" /></Svg>
          <Clock>19:44<br />13-2-2014</Clock>
        </Tray>
      </Taskbar>
    </Screen>
  )
}

export default App
